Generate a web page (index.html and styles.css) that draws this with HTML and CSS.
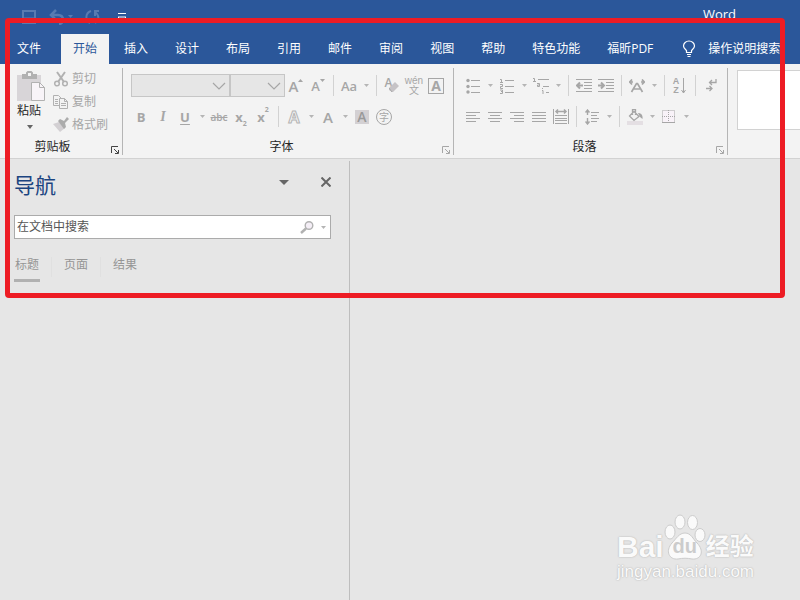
FILE: index.html
```html
<!DOCTYPE html>
<html lang="zh-CN">
<head>
    <meta charset="UTF-8">
    <title>Word</title>
    <meta name="viewport" content="width=device-width, initial-scale=1.0">
    <link rel="stylesheet" href="styles.css">
</head>
<body>
    <!-- Title bar -->
    <header class="title-bar">
        <div class="quick-access">
            <button class="qa-btn" aria-label="保存" disabled>
                <svg width="16" height="16" viewBox="0 0 16 16" fill="none" stroke="currentColor" stroke-width="2"><path d="M2 2h12v12H2z"/><path d="M2 9h12M5 14v-2h6v2" stroke-width="1"/></svg>
            </button>
            <button class="qa-btn" aria-label="撤消" disabled>
                <svg width="24" height="16" viewBox="0 0 24 16" fill="none" stroke="currentColor" stroke-width="2.500"><path d="M7 1L2 6l5 5M2 6h7c4 0 5 3 5 5s-2 4-4 4"/><path d="M19 6h5l-2.500 3z" fill="currentColor" stroke="none"/></svg>
            </button>
            <button class="qa-btn" aria-label="恢复" disabled>
                <svg width="16" height="16" viewBox="0 0 16 16" fill="none" stroke="currentColor" stroke-width="2"><path d="M6 2C0 4 0 12 5 14M9 2h5M10 2v5M10 3c4 3 5 8 0 11"/></svg>
            </button>
            <button class="qa-btn qa-more" aria-label="自定义快速访问工具栏">
                <svg width="10" height="10" viewBox="0 0 10 10" fill="none" stroke="currentColor"><path d="M1 1.500h8"/><path d="M1 5h8L5 9z"/></svg>
            </button>
        </div>
        <div class="title">Word</div>
    </header>

    <!-- Ribbon tabs -->
    <nav class="tabs">
        <a class="tab tab-file" href="#">文件</a>
        <a class="tab active" href="#">开始</a>
        <a class="tab" href="#">插入</a>
        <a class="tab" href="#">设计</a>
        <a class="tab" href="#">布局</a>
        <a class="tab" href="#">引用</a>
        <a class="tab" href="#">邮件</a>
        <a class="tab" href="#">审阅</a>
        <a class="tab" href="#">视图</a>
        <a class="tab" href="#">帮助</a>
        <a class="tab" href="#">特色功能</a>
        <a class="tab" href="#">福昕PDF</a>
        <a class="tab tell-me" href="#">
            <svg width="14" height="18" viewBox="0 0 14 18" fill="none" stroke="currentColor" stroke-width="1.200"><path d="M4.500 12.500v-2C3 9 1.500 8 1.500 6a5.500 5 0 0 1 11 0c0 2-1.500 3-3 4.500v2zM5 14.500h4M5.500 16.500h3"/></svg>
            操作说明搜索
        </a>
    </nav>

    <!-- Ribbon -->
    <section class="ribbon">
        <div class="group group-clipboard">
            <div class="clipboard">
                <button class="paste">
                    <svg width="30" height="32" viewBox="0 0 30 32"><path d="M0 4h24v26H0z" fill="#d8d5d8"/><path d="M5 3h4V1.500L10.500 0h4L16 1.500V3h4v5H5z" fill="#b1b1b1"/><path d="M11 2h3v3h-3z" fill="#f3f3f3"/><path d="M14.500 11.500h8l5 5v13h-13z" fill="#f8f4f8" stroke="#b1b1b1"/><path d="M22.500 11.500v5h5" fill="none" stroke="#b1b1b1"/></svg>
                    <span>粘贴</span>
                    <svg class="caret" width="6" height="4" viewBox="0 0 6 4"><path d="M0 0h6L3 4z"/></svg>
                </button>
                <div class="clip-actions">
                    <button disabled>
                        <svg width="16" height="16" viewBox="0 0 16 16" fill="none" stroke="#b1b1b1" stroke-width="2"><path d="M4 1l7 10M12 1L5 11"/><circle cx="4" cy="12.500" r="2.300" stroke-width="1.500"/><circle cx="12" cy="12.500" r="2.300" stroke-width="1.500"/></svg>
                        剪切
                    </button>
                    <button disabled>
                        <svg width="16" height="16" viewBox="0 0 16 16" fill="#f3f3f3" stroke="#b1b1b1"><path d="M.5 1.500h5l3 3v7h-8zM2 5.500h3M2 7.500h3M2 9.500h3"/><path d="M6.500 4.500h5l3 3v7h-8zM8 9.500h5M8 11.500h5M11.500 4.500v3h3"/></svg>
                        复制
                    </button>
                    <button disabled>
                        <svg width="16" height="16" viewBox="0 0 16 16"><path d="M0 7l6-2 6 6-5 4z" fill="#d3d0d3"/><path d="M5 4l2-2 4 2 3-4 2 2-4 4 1 4-2 2z" fill="#acacac"/></svg>
                        格式刷
                    </button>
                </div>
            </div>
            <div class="group-label">剪贴板
                <button class="launcher dark" aria-label="剪贴板设置"><svg width="8" height="8" viewBox="0 0 8 8" fill="none" stroke="currentColor"><path d="M.5 7V.5H7M3 3l4 4M7.500 4v3.500H4"/></svg></button>
            </div>
        </div>

        <div class="group group-font">
            <div class="row">
                <span class="combo combo-font">
                    <select aria-label="字体" disabled></select>
                    <svg width="14" height="8" viewBox="0 0 14 8" fill="none" stroke="currentColor" stroke-width="1.200"><path d="M1 1l6 6 6-6"/></svg>
                </span>
                <span class="combo combo-size">
                    <select aria-label="字号" disabled></select>
                    <svg width="14" height="8" viewBox="0 0 14 8" fill="none" stroke="currentColor" stroke-width="1.200"><path d="M1 1l6 6 6-6"/></svg>
                </span>
                <button class="tool letter" aria-label="增大字号" disabled>A<svg width="5" height="14" viewBox="0 0 5 14" fill="currentColor"><path d="M0 3h5L2.500 0z"/></svg></button>
                <button class="tool letter small" aria-label="减小字号" disabled>A<svg width="5" height="14" viewBox="0 0 5 14" fill="currentColor"><path d="M0 0h5L2.500 3z"/></svg></button>
                <span class="sep"></span>
                <button class="tool aa" disabled>Aa</button>
                <button class="drop" aria-label="更改大小写选项" disabled><svg width="5" height="3" viewBox="0 0 5 3"><path d="M0 0h5L2.500 3z"/></svg></button>
                <span class="sep"></span>
                <button class="tool clear-format" aria-label="清除格式" disabled>A<svg width="10" height="11" viewBox="0 0 10 11"><path d="M0 7l6-6 4 4-6 6H3L0 9z" fill="#c6c3c6"/><path d="M0 7l3 4" stroke="#aaa"/></svg></button>
                <button class="tool pinyin" disabled><span>wén</span><span>文</span></button>
                <button class="tool" aria-label="字符边框" disabled><span class="boxed">A</span></button>
            </div>
            <div class="row">
                <button class="tool bold" disabled>B</button>
                <button class="tool italic" disabled>I</button>
                <button class="tool underline" disabled>U</button>
                <button class="drop" aria-label="下划线选项" disabled><svg width="5" height="3" viewBox="0 0 5 3"><path d="M0 0h5L2.500 3z"/></svg></button>
                <button class="tool strike" disabled>abc</button>
                <button class="tool script" disabled>x<sub>2</sub></button>
                <button class="tool script" disabled>x<sup>2</sup></button>
                <span class="sep"></span>
                <button class="tool effects" disabled>A</button>
                <button class="drop" aria-label="文本效果选项" disabled><svg width="5" height="3" viewBox="0 0 5 3"><path d="M0 0h5L2.500 3z"/></svg></button>
                <button class="tool letter" disabled>A</button>
                <button class="drop" aria-label="字体颜色选项" disabled><svg width="5" height="3" viewBox="0 0 5 3"><path d="M0 0h5L2.500 3z"/></svg></button>
                <button class="tool" disabled><span class="shaded">A</span></button>
                <button class="tool" disabled><span class="circled">字</span></button>
            </div>
            <div class="group-label">字体
                <button class="launcher" aria-label="字体设置"><svg width="8" height="8" viewBox="0 0 8 8" fill="none" stroke="currentColor"><path d="M.5 7V.5H7M3 3l4 4M7.500 4v3.500H4"/></svg></button>
            </div>
        </div>

        <div class="group group-paragraph">
            <div class="row">
                <button class="tool" aria-label="项目符号" disabled><svg width="14" height="16" viewBox="0 0 14 16" fill="currentColor"><circle cx="2" cy="2.500" r="1.700"/><circle cx="2" cy="8.500" r="1.700"/><circle cx="2" cy="14" r="1.700"/><path d="M5 2h9v1H5zM5 8h9v1H5zM5 14h9v1H5z"/></svg></button>
                <button class="drop" aria-label="项目符号选项" disabled><svg width="5" height="3" viewBox="0 0 5 3"><path d="M0 0h5L2.500 3z"/></svg></button>
                <button class="tool" aria-label="编号" disabled><svg width="14" height="16" viewBox="0 0 14 16" fill="none" stroke="currentColor"><path d="M0 1.500h1.500V5M0 4.500h3M0 6.500h2.500v2H.5v2H3M0 12h2.500v3.500H0M1 13.500h2M5 2.500h9M5 8.500h9M5 14.500h9"/></svg></button>
                <button class="drop" aria-label="编号选项" disabled><svg width="5" height="3" viewBox="0 0 5 3"><path d="M0 0h5L2.500 3z"/></svg></button>
                <button class="tool" aria-label="多级列表" disabled><svg width="16" height="16" viewBox="0 0 16 16" fill="none" stroke="currentColor"><path d="M0 .5h1.500V4M0 3.500h3M5 1.500h11M4 5.500h2.500v3H4.500v-1.500h2M10 8.500h6M9.500 10v1M9 12.500h1V16M13 14.500h3"/></svg></button>
                <button class="drop" aria-label="多级列表选项" disabled><svg width="5" height="3" viewBox="0 0 5 3"><path d="M0 0h5L2.500 3z"/></svg></button>
                <span class="sep"></span>
                <button class="tool" aria-label="减少缩进量" disabled><svg width="16" height="14" viewBox="0 0 16 14" fill="none" stroke="currentColor"><path d="M0 .5h16M8 3.500h8M8 6.500h8M8 9.500h8M0 12.500h16"/><path d="M7 6.500H2M4 3.500l-3 3 3 3" stroke-width="2"/></svg></button>
                <button class="tool" aria-label="增加缩进量" disabled><svg width="16" height="14" viewBox="0 0 16 14" fill="none" stroke="currentColor"><path d="M0 .5h16M8 3.500h8M8 6.500h8M8 9.500h8M0 12.500h16"/><path d="M0 6.500h5M3 3.500l3 3-3 3" stroke-width="2"/></svg></button>
                <span class="sep"></span>
                <button class="tool" aria-label="中文版式" disabled><svg width="16" height="14" viewBox="0 0 16 14" fill="none" stroke="currentColor" stroke-width="1.700"><path d="M2.500 13L7.500 4.500h1l5 8.500M5 10h6M0 3h4M3 .5L.8 3 3 5.500M12 3h4M13 .5L15.200 3 13 5.500"/></svg></button>
                <button class="drop" aria-label="中文版式选项" disabled><svg width="5" height="3" viewBox="0 0 5 3"><path d="M0 0h5L2.500 3z"/></svg></button>
                <span class="sep"></span>
                <button class="tool sort" aria-label="排序" disabled><span class="az"><span>A</span><span>Z</span></span><svg width="6" height="16" viewBox="0 0 6 16" fill="none" stroke="currentColor"><path d="M2.500 0v15M.5 12l2 3 2-3"/></svg></button>
                <span class="sep"></span>
                <button class="tool" aria-label="显示编辑标记" disabled><svg width="11" height="13" viewBox="0 0 11 13" fill="none" stroke="currentColor" stroke-width="1.300"><path d="M10 0v3.500H4M6 1L3.500 3.500 6 6M0 9.500h6M3.500 7L6 9.500 3.500 12"/></svg></button>
            </div>
            <div class="row">
                <button class="tool" aria-label="左对齐" disabled><svg width="14" height="10" viewBox="0 0 14 10" fill="currentColor"><path d="M0 0h14v1H0zM0 3h10v1H0zM0 6h14v1H0zM0 9h10v1H0z"/></svg></button>
                <button class="tool" aria-label="居中" disabled><svg width="14" height="10" viewBox="0 0 14 10" fill="currentColor"><path d="M0 0h14v1H0zM2 3h10v1H2zM0 6h14v1H0zM2 9h10v1H2z"/></svg></button>
                <button class="tool" aria-label="右对齐" disabled><svg width="14" height="10" viewBox="0 0 14 10" fill="currentColor"><path d="M0 0h14v1H0zM4 3h10v1H4zM0 6h14v1H0zM4 9h10v1H4z"/></svg></button>
                <button class="tool" aria-label="两端对齐" disabled><svg width="14" height="10" viewBox="0 0 14 10" fill="currentColor"><path d="M0 0h14v1H0zM0 3h14v1H0zM0 6h14v1H0zM0 9h14v1H0z"/></svg></button>
                <button class="tool" aria-label="分散对齐" disabled><svg width="16" height="16" viewBox="0 0 16 16" fill="none" stroke="currentColor"><path d="M.5 0v15M15.500 0v15M2 6.500h12M2 9.500h12M2 11.500h12M2 14.500h12"/><path d="M3 2.500h10M5 .5l-2 2 2 2M11 .5l2 2-2 2" stroke-width="1.500"/></svg></button>
                <span class="sep"></span>
                <button class="tool" aria-label="行和段落间距" disabled><svg width="14" height="16" viewBox="0 0 14 16" fill="none" stroke="currentColor"><path d="M6 3.500h8M6 6.500h6M6 9.500h8M6 12.500h6"/><path d="M2.500 1v5M.5 3.500l2-2.500 2 2.500M2.500 9v6M.5 12.500l2 2.500 2-2.500" stroke-width="1.400"/></svg></button>
                <button class="drop" aria-label="间距选项" disabled><svg width="5" height="3" viewBox="0 0 5 3"><path d="M0 0h5L2.500 3z"/></svg></button>
                <span class="sep"></span>
                <button class="tool" aria-label="底纹" disabled><svg width="16" height="16" viewBox="0 0 16 16" fill="none" stroke="currentColor"><path d="M0 12h16v4H0z" fill="#e4dfe3" stroke="none"/><path d="M2.500 7L7 2.500 12 7.500 7 11.500zM5.500 6V.5h3V6" stroke-width="1.300"/><path d="M11 4c3 0 5 2 4.500 6L13 8z" fill="currentColor" stroke="none"/></svg></button>
                <button class="drop" aria-label="底纹选项" disabled><svg width="5" height="3" viewBox="0 0 5 3"><path d="M0 0h5L2.500 3z"/></svg></button>
                <button class="tool" aria-label="边框" disabled><svg width="14" height="14" viewBox="0 0 14 14" fill="#f8f2f8" stroke="currentColor"><path d="M.5.5h12v12H.5zM6.500 0v12M0 6.500h13" stroke-dasharray="1 1"/><path d="M0 12.500h13"/></svg></button>
                <button class="drop" aria-label="边框选项" disabled><svg width="5" height="3" viewBox="0 0 5 3"><path d="M0 0h5L2.500 3z"/></svg></button>
            </div>
            <div class="group-label">段落
                <button class="launcher" aria-label="段落设置"><svg width="8" height="8" viewBox="0 0 8 8" fill="none" stroke="currentColor"><path d="M.5 7V.5H7M3 3l4 4M7.500 4v3.500H4"/></svg></button>
            </div>
        </div>

        <div class="style-gallery"></div>
    </section>

    <!-- Workspace -->
    <main class="workspace">
        <aside class="nav-pane">
            <div class="nav-header">
                <h1>导航</h1>
                <button aria-label="任务窗格选项"><svg width="10" height="5" viewBox="0 0 10 5" fill="currentColor"><path d="M0 0h10L5 5z"/></svg></button>
                <button aria-label="关闭"><svg width="10" height="10" viewBox="0 0 10 10" stroke="currentColor" stroke-width="2"><path d="M.5.5l9 9M9.500.5l-9 9"/></svg></button>
            </div>
            <div class="search">
                <input type="text" placeholder="在文档中搜索" aria-label="在文档中搜索">
                <button aria-label="搜索"><svg width="14" height="13" viewBox="0 0 14 13" fill="#f4eef6" stroke="#b1b1b1"><circle cx="9" cy="4.500" r="3.800" stroke-width="1.400"/><path d="M6 7.500L1 12" stroke-width="2.500"/></svg></button>
                <button class="drop" aria-label="搜索选项"><svg width="5" height="3" viewBox="0 0 5 3"><path d="M0 0h5L2.500 3z"/></svg></button>
            </div>
            <div class="nav-tabs">
                <a class="active" href="#">标题</a>
                <span class="nav-sep"></span>
                <a href="#">页面</a>
                <span class="nav-sep"></span>
                <a href="#">结果</a>
            </div>
        </aside>
        <div class="document"></div>
    </main>

    <div class="highlight"></div>

    <div class="watermark">
        <div class="wm-logo">
            <span class="wm-bai">Bai</span>
            <span class="wm-paw">
                <svg width="42" height="46" viewBox="0 0 42 46" fill="#fafafa" stroke="#ccc"><ellipse cx="6" cy="18" rx="5" ry="7"/><ellipse cx="16" cy="8" rx="5" ry="7"/><ellipse cx="28.500" cy="8.500" rx="5" ry="7"/><ellipse cx="36" cy="21" rx="5" ry="6.500"/><path d="M21 19c6 0 8 6 12 10 8 8 4 17-5 16-5-1-9-1-14 0-9 1-13-8-6-16 4-4 7-10 13-10z"/></svg>
                <b>du</b>
            </span>
            <span class="wm-cn">经验</span>
        </div>
        <div class="wm-url">jingyan.baidu.com</div>
    </div>
</body>
</html>
```
FILE: styles.css
```css
:root {
    --blue: #2b579a;
    --ribbon: #f3f3f3;
    --line: #d2d2d2;
    --icon: #a6a6a6;
}

* {
    box-sizing: border-box;
}

body {
    margin: 0;
    min-height: 100vh;
    display: flex;
    flex-direction: column;
    position: relative;
    overflow: hidden;
    background: #e6e6e6;
    color: #262626;
    font: 12px/16px "Open Sans", "Noto Sans CJK SC", sans-serif;
}

button {
    display: flex;
    align-items: center;
    justify-content: center;
    flex: none;
    padding: 0;
    border: none;
    background: none;
    color: inherit;
    font: inherit;
}

a {
    color: inherit;
    text-decoration: none;
}

svg {
    display: block;
    flex: none;
}

/* Title bar */
.title-bar {
    display: flex;
    align-items: flex-start;
    justify-content: space-between;
    height: 34px;
    padding: 6px 64px 0 21px;
    background: var(--blue);
    color: white;
}

.quick-access {
    display: flex;
    gap: 12px;
    padding-top: 3px;
}

.qa-btn {
    height: 16px;
    color: #587bb1;
}

.qa-more {
    margin-left: 4px;
    color: white;
}

.title {
    font-size: 13px;
}

/* Tabs */
.tabs {
    display: flex;
    gap: 3px;
    height: 30px;
    padding-left: 5px;
    background: var(--blue);
    color: white;
}

.tab {
    display: flex;
    align-items: center;
    flex: none;
    padding: 0 12px;
    white-space: nowrap;
}

.tab-file {
    margin-right: 5px;
}

.tab.active {
    background: var(--ribbon);
    color: var(--blue);
}

.tell-me {
    gap: 12px;
    padding-left: 14px;
}

/* Ribbon */
.ribbon {
    display: flex;
    height: 95px;
    padding-top: 4px;
    background: var(--ribbon);
    border-bottom: 1px solid var(--line);
}

.group {
    display: flex;
    flex-direction: column;
    flex: none;
    height: 87px;
    padding: 2px 0 0 8px;
    border-right: 1px solid #b5b5b5;
}

.group-clipboard {
    width: 123px;
    padding-left: 17px;
}

.group-font {
    width: 331px;
    padding-left: 7px;
}

.group-paragraph {
    width: 274px;
}

.group-label {
    position: relative;
    margin: auto 20px 0 0;
    text-align: center;
}

.group-clipboard .group-label {
    margin: auto 34px 0 0;
}

.launcher {
    position: absolute;
    right: -17px;
    bottom: 1px;
    color: var(--icon);
}

.group-clipboard .launcher {
    right: -31px;
}

.launcher.dark {
    color: #444;
}

.clipboard {
    display: flex;
    gap: 8px;
}

.paste {
    flex-direction: column;
    align-items: flex-start;
    justify-content: flex-start;
    align-self: flex-start;
    width: 28px;
    padding-top: 1px;
}

.paste .caret {
    margin: 6px 0 0 10px;
    fill: #666;
}

.clip-actions button {
    gap: 3px;
    height: 23px;
    margin-top: -3px;
    margin-bottom: 3px;
    color: var(--icon);
}

.row {
    display: flex;
    align-items: center;
    height: 31px;
    color: var(--icon);
}

.tool {
    width: 22px;
    height: 22px;
}

.drop {
    width: 12px;
    height: 22px;
}

.drop svg {
    fill: #b5b5b5;
}

.sep {
    width: 1px;
    height: 21px;
    margin: 0 4px;
    background: var(--line);
}

.combo {
    position: relative;
    height: 23px;
}

.combo select {
    display: block;
    width: 100%;
    height: 100%;
    appearance: none;
    border: 1px solid #c6c6c6;
    border-radius: 0;
    background: #e6e6e6;
    opacity: 1;
}

.combo svg {
    position: absolute;
    right: 4px;
    top: 8px;
}

.combo-font {
    width: 99px;
    margin-left: 1px;
}

.combo-size {
    width: 55px;
}

.letter {
    font-size: 15px;
    font-weight: 600;
}

.letter.small {
    font-size: 13px;
}

.aa {
    font-size: 13px;
    font-weight: 600;
}

.clear-format {
    font-size: 12px;
    font-weight: 600;
    align-items: flex-start;
}

.clear-format svg {
    margin: 6px 0 0 -3px;
}

.pinyin {
    flex-direction: column;
    font-family: "Liberation Sans", "Noto Sans CJK SC", sans-serif;
    font-size: 10px;
    line-height: 10px;
}

.boxed {
    width: 16px;
    border: 1px solid var(--icon);
    font-size: 14px;
    font-weight: 700;
    line-height: 14px;
}

.bold {
    font-size: 13px;
    font-weight: 700;
}

.italic {
    font: italic 700 14px "Liberation Serif", serif;
}

.underline {
    font-size: 13px;
    font-weight: 700;
    text-decoration: underline;
    text-underline-offset: 2px;
}

.strike {
    font-size: 10px;
    font-weight: 600;
    text-decoration: line-through;
}

.script {
    font-size: 13px;
    font-weight: 700;
}

.script sub,
.script sup {
    font-size: 7px;
    line-height: 8px;
}

.script sub {
    align-self: flex-end;
}

.script sup {
    align-self: flex-start;
}

.effects {
    color: var(--ribbon);
    font-size: 16px;
    font-weight: 700;
    -webkit-text-stroke: 1px #b5b5b5;
}

.shaded {
    width: 14px;
    background: #d3d0d3;
    color: #999;
    font-size: 14px;
    font-weight: 600;
    line-height: 14px;
}

.circled {
    width: 16px;
    border: 1px solid var(--icon);
    border-radius: 50%;
    font-size: 10px;
    line-height: 14px;
}

.sort {
    gap: 2px;
}

.az {
    display: flex;
    flex-direction: column;
    font-family: "Liberation Sans", sans-serif;
    font-size: 9px;
    font-weight: 700;
    line-height: 9px;
}

.style-gallery {
    flex: 1;
    height: 60px;
    margin: 2px 0 0 9px;
    background: white;
    border: 1px solid var(--line);
    border-right: none;
}

/* Workspace */
.workspace {
    display: flex;
    flex: 1;
    padding-top: 2px;
}

.nav-pane {
    flex: none;
    width: 350px;
    padding: 9px 18px 0 14px;
    border-right: 1px solid #bebebe;
}

.document {
    flex: 1;
}

.nav-header {
    display: flex;
    align-items: flex-start;
    gap: 32px;
    height: 30px;
    color: #666;
}

.nav-header button {
    height: 24px;
}

.nav-header h1 {
    flex: 1;
    margin: 0;
    color: #1b4480;
    font-size: 21px;
    font-weight: 400;
    line-height: 30px;
}

.search {
    display: flex;
    height: 24px;
    margin-top: 15px;
    padding-right: 1px;
    background: white;
    border: 1px solid #ababab;
}

.search input {
    flex: 1;
    min-width: 0;
    padding: 0 2px;
    border: none;
    outline: none;
    background: none;
    font: inherit;
}

.search .drop {
    margin-left: 3px;
}

.search input::placeholder {
    color: #555;
}

.nav-tabs {
    display: flex;
    gap: 11px;
    margin-top: 18px;
    color: #959595;
}

.nav-tabs a {
    padding: 0 1px 6px;
    border-bottom: 3px solid transparent;
}

.nav-tabs a.active {
    border-color: #b1b1b1;
}

.nav-sep {
    width: 1px;
    height: 20px;
    background: #e0e0e0;
}

/* Red frame */
.highlight {
    position: absolute;
    top: 18px;
    left: 5px;
    right: 15px;
    height: 280px;
    border: 5px solid #ed1c24;
    border-radius: 4px;
    pointer-events: none;
}

/* Watermark */
.watermark {
    position: absolute;
    right: 46px;
    bottom: 18px;
    color: #fafafa;
    text-shadow: 0 0 1px #bbb, 0 0 2px #bbb;
}

.wm-logo {
    display: flex;
    align-items: flex-end;
    height: 46px;
}

.wm-bai {
    font: 700 30px/26px "Liberation Sans", sans-serif;
}

.wm-paw {
    position: relative;
}

.wm-paw b {
    position: absolute;
    left: 0;
    right: 0;
    bottom: 4px;
    color: #ccc;
    font: 700 20px/20px "Liberation Sans", sans-serif;
    text-align: center;
    text-shadow: none;
}

.wm-cn {
    font-size: 24px;
    font-weight: 700;
    line-height: 28px;
}

.wm-url {
    margin-top: 2px;
    font: 17px/20px "Liberation Sans", sans-serif;
}
```
